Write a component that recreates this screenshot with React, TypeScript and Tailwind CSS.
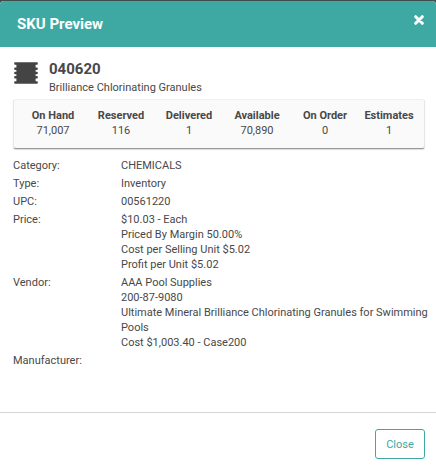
import type { ReactNode } from "react";

const stats = [
  { label: "On Hand", value: "71,007" },
  { label: "Reserved", value: "116" },
  { label: "Delivered", value: "1" },
  { label: "Available", value: "70,890" },
  { label: "On Order", value: "0" },
  { label: "Estimates", value: "1" },
];

const details = [
  { label: "Category:", lines: ["CHEMICALS"] },
  { label: "Type:", lines: ["Inventory"] },
  { label: "UPC:", lines: ["00561220"] },
  {
    label: "Price:",
    lines: ["$10.03 - Each", "Priced By Margin 50.00%", "Cost per Selling Unit $5.02", "Profit per Unit $5.02"],
  },
  {
    label: "Vendor:",
    lines: [
      "AAA Pool Supplies",
      "200-87-9080",
      "Ultimate Mineral Brilliance Chlorinating Granules for Swimming Pools",
      "Cost $1,003.40 - Case200",
    ],
  },
  { label: "Manufacturer:", lines: [] },
];

function CloseIcon() {
  return (
    <svg viewBox="0 0 10 10" className="block size-[10px]" aria-hidden="true">
      <path d="M1.7 1.7 8.3 8.3M8.3 1.7 1.7 8.3" stroke="#fff" strokeWidth="3" strokeLinecap="round" />
    </svg>
  );
}

function SkuIcon() {
  return (
    <svg viewBox="0 0 24 22" className="mt-[3px] h-[22px] w-6 shrink-0" aria-hidden="true">
      <path
        fill="#444"
        d="M1 .3h22a.8.8 0 0 1 .8.8v.9a.8.8 0 0 1-.8.8h-1.400v2.600h1.400a.8.8 0 0 1 .8.8v.9a.8.8 0 0 1-.8.8h-1.400v1.800h1.400a.8.8 0 0 1 .8.8v1a.8.8 0 0 1-.8.8h-1.400v1.800h1.400a.8.8 0 0 1 .8.8v.9a.8.8 0 0 1-.8.8h-1.400v2.600h1.400a.8.8 0 0 1 .8.8v.9a.8.8 0 0 1-.8.8H1a.8.8 0 0 1-.8-.8v-.9a.8.8 0 0 1 .8-.8h1.400v-2.600H1a.8.8 0 0 1-.8-.8v-.9a.8.8 0 0 1 .8-.8h1.400v-1.800H1a.8.8 0 0 1-.8-.8v-1a.8.8 0 0 1 .8-.8h1.400V7.900H1a.8.8 0 0 1-.8-.8v-.9a.8.8 0 0 1 .8-.8h1.400V2.800H1A.8.8 0 0 1 .2 2v-.9A.8.8 0 0 1 1 .3Z"
      />
    </svg>
  );
}

function DetailRow({ label, children }: { label: string; children?: ReactNode }) {
  return (
    <div className="flex">
      <dt className="w-[108px] shrink-0">{label}</dt>
      <dd className="min-w-0 flex-1">{children}</dd>
    </div>
  );
}

export default function App() {
  return (
    <div className="bg-[#444b4b] pt-px font-['Roboto',sans-serif] text-[11px] leading-[15px] text-[#484848]">
      <section className="overflow-hidden rounded-t-[4px] bg-white" role="dialog" aria-labelledby="sku-title">
        <header className="flex items-start justify-between bg-[#3ea9a3] px-3 py-3 text-white">
          <h2 id="sku-title" className="pl-[5px] text-[15px] leading-[22px] font-bold">
            SKU Preview
          </h2>
          <button type="button" aria-label="Dismiss" className="mt-[2px] cursor-pointer">
            <CloseIcon />
          </button>
        </header>

        <div className="pl-[13px]">
          <div className="flex gap-[11px] pt-3 pl-px">
            <SkuIcon />
            <div>
              <h3 className="text-[15px] leading-5 font-bold">040620</h3>
              <p className="leading-[18px]">Brilliance Chlorinating Granules</p>
            </div>
          </div>

          <dl className="mt-[2px] mr-[11px] grid grid-cols-[17fr_17fr_17fr_17fr_17fr_15fr] rounded-[3px] border border-b-[#999] border-x-[#e6e6e6] border-t-[#f0f0f0] bg-[#fafafa] px-[5px] pt-2 pb-[10px] text-center shadow-[0_1px_1px_#ddd]">
            {stats.map((s) => (
              <div key={s.label}>
                <dt className="font-bold">{s.label}</dt>
                <dd>{s.value}</dd>
              </div>
            ))}
          </dl>

          <dl className="mt-[9px] flex flex-col gap-[3px]">
            {details.map((d) => (
              <DetailRow key={d.label} label={d.label}>
                {d.lines.map((line) => (
                  <p key={line}>{line}</p>
                ))}
              </DetailRow>
            ))}
          </dl>
        </div>

        <footer className="mt-11 flex justify-end border-t border-[#d5d5d5] px-[11px] pt-4 pb-3">
          <button
            type="button"
            className="h-[30px] w-[50px] cursor-pointer rounded-[3px] border border-[#3ea9a3] bg-white text-[#3ea9a3]"
          >
            Close
          </button>
        </footer>
      </section>
    </div>
  );
}
